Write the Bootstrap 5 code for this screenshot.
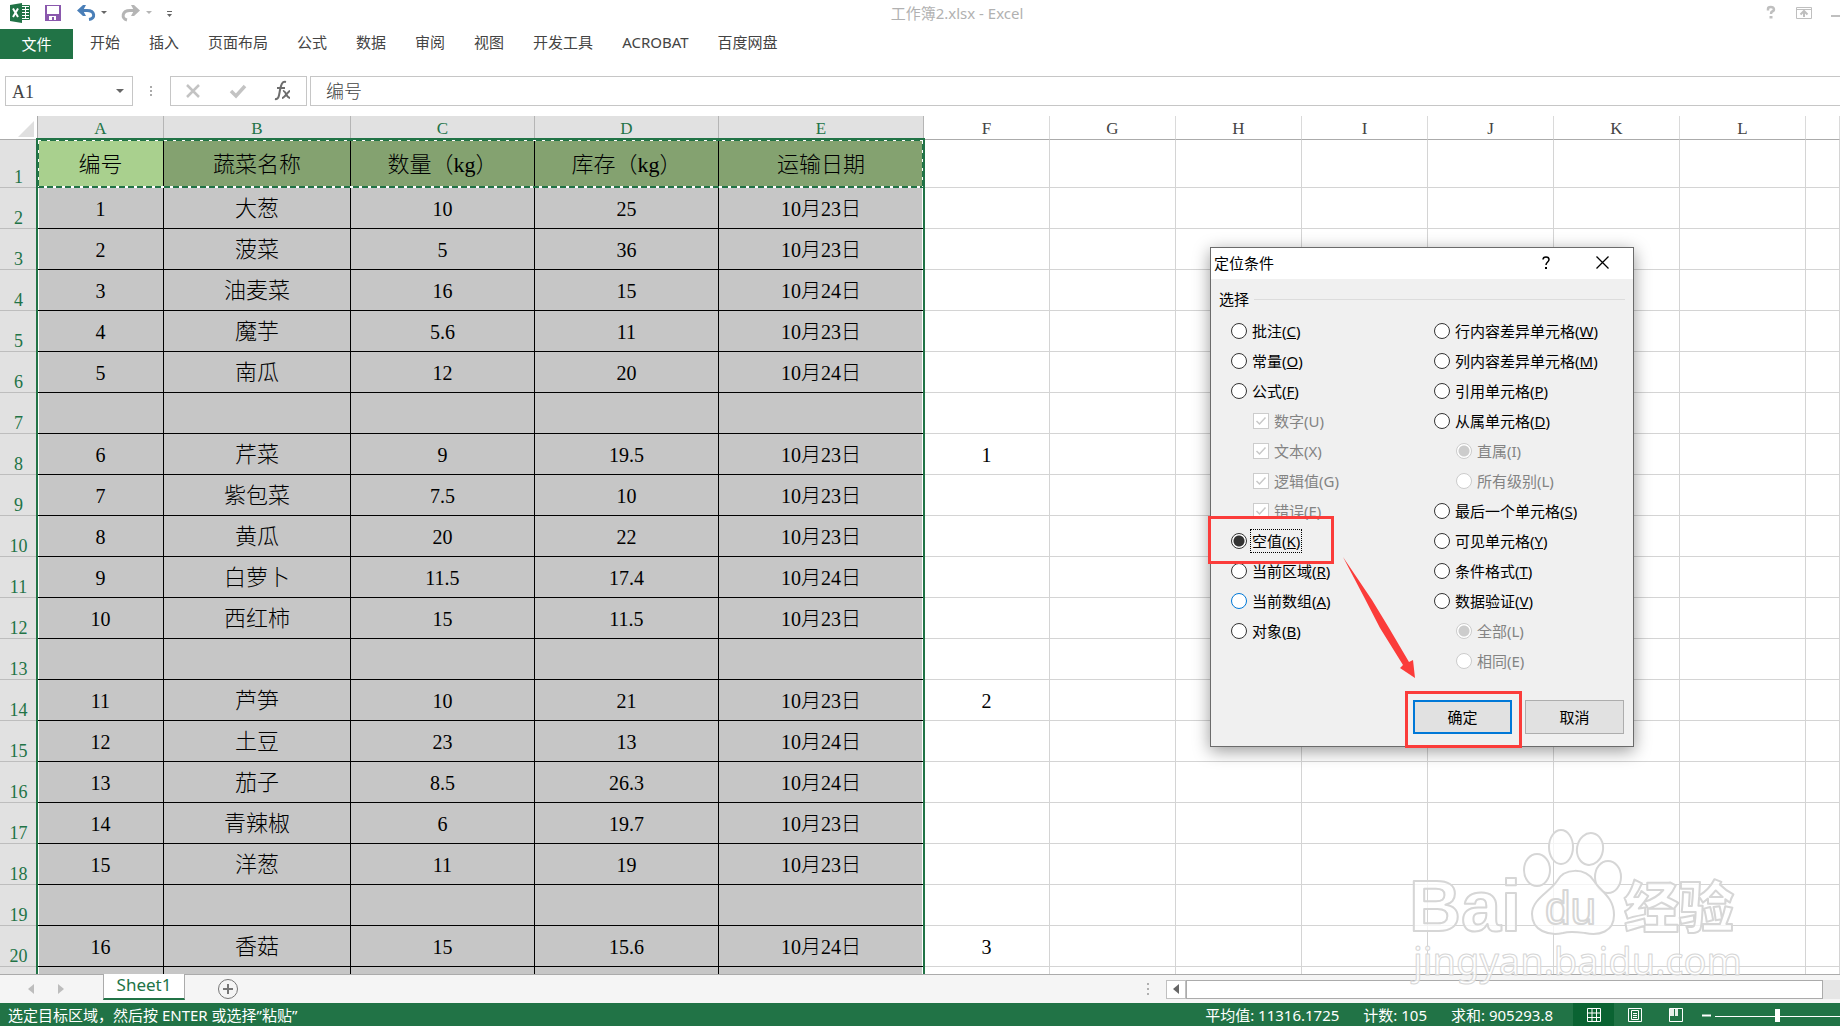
<!DOCTYPE html>
<html lang="zh-CN">
<head>
<meta charset="utf-8">
<meta name="viewport" content="width=device-width, initial-scale=1">
<title>工作簿2.xlsx - Excel</title>
<link href="https://cdn.jsdelivr.net/npm/bootstrap@5.3.0/dist/css/bootstrap.min.css" rel="stylesheet">
<style>
:root{--xl:#217346;--line:#d4d4d4;--ui:"Noto Sans","Noto Sans CJK SC",sans-serif;--sheet:"Liberation Serif","Noto Sans CJK SC",serif}
body{font-family:var(--ui);font-size:15px;line-height:20px;color:#444;background:#fff}
button,input{font:inherit;color:inherit}
.app{min-width:1200px}
.titlebar{height:29px;padding:0 0 4px 74px}
.titlebar .doc-title{color:#b1b1b1}
.icon-btn{border:0;background:none;padding:0;display:flex;align-items:center;justify-content:center}
.icon-btn svg{display:block}
.quick{left:0;top:0}
.wincontrols{right:0;top:0}
.ribbon{height:30px;gap:1px}
.ribbon .nav-link{color:#444;padding:0 14px;line-height:27px}
.ribbon .file-tab{background:var(--xl);color:#fff;width:73px;padding:0;text-align:center;line-height:30px;margin-right:2px}
.formula{height:57px;padding:17px 0 10px 5px}
.fbox{border:1px solid #c6c6c6;height:30px;background:#fff}
.namebox{width:128px}
.namebox input,.fx-input{border:0;outline:0;background:none;min-width:0;width:100%;font-family:var(--sheet);font-size:18px;font-weight:300;padding-top:3px}
.fx-group{width:137px;margin-left:16px;margin-right:3px}
.fx-input{padding-left:15px}
.grid-area{min-height:0}
.sheet-grid{table-layout:fixed;width:100%;border-collapse:separate;border-spacing:0;font-family:var(--sheet);font-size:20px;line-height:24px;color:#000}
.sheet-grid th,.sheet-grid td{padding:0;text-align:center;vertical-align:middle;font-weight:300;overflow:hidden;white-space:nowrap;border-right:1px solid var(--line);border-bottom:1px solid var(--line)}
.sheet-grid td{padding-top:2px}
.sheet-grid thead th{height:24px;font-size:17px;line-height:20px;padding-top:3px;color:#444;border-bottom-color:#ababab;border-right-color:#dadada}
.sheet-grid thead th.sel{background:#e1e1e1;color:var(--xl);border-right-color:#b5b5b5}
.sheet-grid thead th.corner{background:#fff;text-align:right;border-color:#ababab}
.corner svg{display:block;margin-left:18px}
.sheet-grid tbody tr{height:41px}
.sheet-grid tbody tr:first-child{height:48px}
.sheet-grid tbody th{background:#e1e1e1;color:var(--xl);font-size:18px;line-height:20px;vertical-align:bottom;border-bottom-color:#bdbdbd;border-right-color:var(--xl)}
.sheet-grid td.sel{background:#c6c6c6;border-color:#000}
.sheet-grid td.edge{box-shadow:inset -1px 0 #fff}
.sheet-grid td.start{box-shadow:inset 1px 0 #fff}
.sheet-grid td.veg{font-size:22px}
.sheet-grid tr.head td.sel{background:#84a270;font-size:22px}
.sheet-grid tr.head td.active-cell{background:#a9d08e}
.selection{left:36px;top:22px;width:889px;bottom:0;border:2px solid var(--xl);border-bottom:0}
.ants{left:36px;top:22px}
.sheetbar{height:29px;background:#f5f5f5;border-top:1px solid #ababab}
.sheet-tab{width:82px;height:26px;margin:-1px 24px 0 39px;background:#fff;border:1px solid #ababab;border-top:0;border-bottom:2px solid var(--xl);color:var(--xl);font-size:17px;line-height:22px;text-align:center;text-decoration:none}
.scrollrow{width:674px;height:19px;background:#e6e6e6}
.scrollrow .arrow{width:20px;border:1px solid #c0c0c0;background:#fff}
.scrollrow .thumb{width:637px;border:1px solid #ababab;background:#fff}
.statusbar{height:23px;background:var(--xl);color:#fff}
.status-stats{gap:24px;margin-right:20px}
.view-btn{width:41px;height:23px}
.view-btn.current{background:#0a6332}
.dlg{left:1210px;top:247px;width:424px;height:500px;background:#f0f0f0;border:1px solid #6b6b6b;color:#000;box-shadow:0 4px 16px rgba(0,0,0,.4)}
.dlg-title{height:31px;background:#fff;padding:0 2px 2px 3px}
.dlg-title .icon-btn{width:57px;height:29px}
.group-title{height:38px;padding:2px 8px 0 8px}
.group-title::after{content:"";flex:1;border-top:1px solid #dcdcdc;margin-left:5px}
.opts{padding:0 20px;margin-top:-1px}
.opt{height:30px;gap:5px}
.opt.sub{padding-left:22px}
.opt input{appearance:none;width:16px;height:16px;flex:none;margin:0;border:1px solid #333;background:#fff}
.opt input[type=radio]{border-radius:50%}
.opt input[type=radio]:checked{background:radial-gradient(circle,#333 0 5px,#fff 6px)}
.opt input:disabled{border-color:#ccc}
.opt input[type=radio]:disabled:checked{background:radial-gradient(circle,#ccc 0 5px,#fff 6px)}
.opt input[type=checkbox]:checked{background:#fff url("data:image/svg+xml,%3Csvg xmlns='http://www.w3.org/2000/svg' viewBox='0 0 14 14'%3E%3Cpath d='M2.5 7l3 3 6-6.500' fill='none' stroke='%23c8c8c8' stroke-width='1.500'/%3E%3C/svg%3E")}
.opt input.hot{border-color:#0078d7}
.opt input:disabled+label{color:#838383}
.opt label{line-height:20px}
.opt label.focused{outline:1px dotted #000;outline-offset:1px}
.opts-left{width:203px}
.dlg-btn{width:99px;height:34px;border:1px solid #adadad;background:#e1e1e1;padding:0}
.dlg-btn.default{border:2px solid #0078d7}
.dlg-foot{padding:0 9px 12px;gap:13px}
.callout{border:3px solid #fb3c3a;pointer-events:none}
.callout.pick{left:1208px;top:516px;width:126px;height:48px}
.callout.ok{left:1405px;top:691px;width:117px;height:57px}
.callout-arrow{left:1335px;top:550px;pointer-events:none}
.watermark{left:1400px;top:820px;pointer-events:none}
</style>
</head>
<body>
<div class="app position-relative d-flex flex-column vh-100 overflow-hidden">
  <header class="titlebar position-relative d-flex align-items-center justify-content-center flex-shrink-0">
    <div class="quick position-absolute">
      <svg width="180" height="29" viewBox="0 0 180 29" role="img" aria-label="Excel">
        <path d="M20 5.500h9.500v14H20z" fill="#fff" stroke="#217346"/>
        <path d="M22 8h3m1 0h3M22 11h3m1 0h3M22 14h3m1 0h3M22 17h3m1 0h3" stroke="#217346" stroke-width="2"/>
        <path d="M10 5l12-2v20l-12-2z" fill="#217346"/>
        <path d="M13 8.500l5 8.500M18 8.500L13 17" stroke="#fff" stroke-width="2"/>
        <path d="M45 5h16v16H45z" fill="#8a58ad"/><path d="M47 6h12v8H47zM49 16h7v4h-2v-3h-2v3h-3z" fill="#fff"/>
        <path d="M81 10.500h6c8 0 9 8 2 9" fill="none" stroke="#4a7fb8" stroke-width="3"/><path d="M77 10.500L83 5h3l-3 5.500 3 5.500h-3z" fill="#4a7fb8"/>
        <path d="M101 11h6l-3 3z" fill="#666"/>
        <path d="M136 10.500h-6c-8 0-9 8-3 9.500" fill="none" stroke="#b5b5b5" stroke-width="3"/><path d="M140 10.500L134 5h-3l3 5.500-3 5.500h3z" fill="#b5b5b5"/>
        <path d="M146 11h6l-3 3z" fill="#b5b5b5"/>
        <path d="M167 11.500h5" stroke="#666"/><path d="M167 14h5l-2.500 3z" fill="#666"/>
      </svg>
    </div>
    <span class="doc-title">工作簿2.xlsx - Excel</span>
    <div class="wincontrols position-absolute">
      <svg width="80" height="29" viewBox="0 0 80 29" role="img" aria-label="窗口按钮">
        <path d="M8 10.500V9c0-1.500 1-2 2.700-2 4 0 4 3.500 1.500 4.500-1.200.5-1.200 1-1.200 2.500" fill="none" stroke="#bfbfbf" stroke-width="2.500"/><path d="M9.500 16h3v2.500h-3z" fill="#bfbfbf"/>
        <path d="M36.500 7.500h15v11h-15zM36.500 9.500h15" fill="none" stroke="#bfbfbf"/><path d="M44 17v-6m-3.500 3.500L44 11l3.500 3.500" fill="none" stroke="#bfbfbf" stroke-width="2"/>
        <path d="M71 16h9" stroke="#bfbfbf" stroke-width="2"/>
      </svg>
    </div>
  </header>
  <nav class="ribbon nav flex-shrink-0">
    <a class="nav-link file-tab" href="#">文件</a>
    <a class="nav-link" href="#">开始</a>
    <a class="nav-link" href="#">插入</a>
    <a class="nav-link" href="#">页面布局</a>
    <a class="nav-link" href="#">公式</a>
    <a class="nav-link" href="#">数据</a>
    <a class="nav-link" href="#">审阅</a>
    <a class="nav-link" href="#">视图</a>
    <a class="nav-link" href="#">开发工具</a>
    <a class="nav-link" href="#">ACROBAT</a>
    <a class="nav-link" href="#">百度网盘</a>
  </nav>
  <div class="formula d-flex flex-shrink-0">
    <div class="fbox namebox d-flex align-items-center ps-1">
      <input type="text" value="A1" aria-label="名称框">
      <button class="icon-btn pe-2" type="button" aria-label="展开"><svg width="8" height="4"><path d="M0 0h8l-4 4z" fill="#666"/></svg></button>
    </div>
    <svg class="ms-3" width="5" height="30"><path d="M1 10h2v2H1zM1 14h2v2H1zM1 18h2v2H1z" fill="#aaa"/></svg>
    <div class="fbox fx-group d-flex align-items-center">
      <button class="icon-btn flex-fill" type="button" aria-label="取消"><svg width="16" height="16"><path d="M2 2l12 12M14 2L2 14" stroke="#c3c3c3" stroke-width="2.500"/></svg></button>
      <button class="icon-btn flex-fill" type="button" aria-label="输入"><svg width="18" height="16"><path d="M2 8l5 5L16 3" fill="none" stroke="#c3c3c3" stroke-width="3.500"/></svg></button>
      <button class="icon-btn flex-fill" type="button" aria-label="插入函数"><svg width="18" height="22"><path d="M1 19c4 1 4-4 5-9s2-9 6-8M3 8h8" fill="none" stroke="#6d6d6d" stroke-width="2"/><path d="M9 11c3-1 3 7 7 7M16 11c-2 0-5 7-8 7" fill="none" stroke="#6d6d6d" stroke-width="2"/></svg></button>
    </div>
    <div class="fbox flex-fill border-end-0 d-flex"><input class="fx-input" type="text" value="编号" aria-label="编辑栏"></div>
  </div>

  <main class="grid-area flex-fill position-relative overflow-hidden">
    <table class="sheet-grid">
      <colgroup><col style="width:38px"><col style="width:126px"><col style="width:187px"><col style="width:184px"><col style="width:184px"><col style="width:205px"><col style="width:126px"><col style="width:126px"><col style="width:126px"><col style="width:126px"><col style="width:126px"><col style="width:126px"><col style="width:126px"><col></colgroup>
      <thead><tr><th class="corner" aria-label="全选"><svg width="16" height="16"><path d="M16 0v16H0z" fill="#dfdfdf"/></svg></th><th class="sel">A</th><th class="sel">B</th><th class="sel">C</th><th class="sel">D</th><th class="sel">E</th><th>F</th><th>G</th><th>H</th><th>I</th><th>J</th><th>K</th><th>L</th><th></th></tr></thead>
      <tbody id="rows"></tbody>
    </table>
    <div class="selection position-absolute"></div>
    <svg class="ants position-absolute" width="889" height="52">
      <path d="M2 49h886" stroke="#fff" stroke-width="2"/>
      <path d="M2 49h886" stroke="#217346" stroke-width="2" stroke-dasharray="6 3"/>
      <path d="M2 2.500h886M2.500 3v46M886.500 3v46" stroke="#217346"/>
      <path d="M2 2.500h886M2.500 3v46M886.500 3v46" stroke="#fff" stroke-dasharray="3 6"/>
    </svg>
  </main>

  <div class="sheetbar d-flex flex-shrink-0 position-relative">
    <div class="d-flex align-items-center">
      <button class="icon-btn ms-4 ps-1" type="button" aria-label="上一张"><svg width="6" height="10"><path d="M6 0v10L0 5z" fill="#bdbdbd"/></svg></button>
      <button class="icon-btn ms-4" type="button" aria-label="下一张"><svg width="6" height="10"><path d="M0 0v10l6-5z" fill="#bdbdbd"/></svg></button>
    </div>
    <a class="sheet-tab" href="#">Sheet1</a>
    <button class="icon-btn ms-2" type="button" aria-label="新工作表"><svg width="22" height="22"><circle cx="11" cy="11" r="9.500" fill="none" stroke="#767676"/><path d="M6 11h10M11 6v10" stroke="#767676" stroke-width="2"/></svg></button>
    <div class="ms-auto d-flex align-items-center">
      <svg class="me-3" width="4" height="14"><path d="M1 1h2v2H1zM1 6h2v2H1zM1 11h2v2H1z" fill="#b0b0b0"/></svg>
      <div class="scrollrow d-flex">
        <button class="icon-btn arrow" type="button" aria-label="向左滚动"><svg width="6" height="10"><path d="M6 0v10L0 5z" fill="#666"/></svg></button>
        <div class="thumb"></div>
      </div>
    </div>
  </div>
  <footer class="statusbar d-flex align-items-center flex-shrink-0">
    <span class="ps-2">选定目标区域，然后按 ENTER 或选择”粘贴”</span>
    <div class="ms-auto d-flex align-items-center">
      <div class="status-stats d-flex"><span>平均值: 11316.1725</span><span>计数: 105</span><span>求和: 905293.8</span></div>
      <button class="icon-btn view-btn current" type="button" aria-label="普通"><svg width="14" height="14"><path d="M.5.500h13v13H.5zM5 0v14M9.500 0v14M0 5h14M0 9.500h14" fill="none" stroke="#fff"/></svg></button>
      <button class="icon-btn view-btn" type="button" aria-label="页面布局"><svg width="14" height="14"><path d="M.5.500h13v13H.5zM3.500 2.500h7v9h-7zM5 5.500h4M5 7.500h4M5 9.500h4" fill="none" stroke="#fff"/></svg></button>
      <button class="icon-btn view-btn" type="button" aria-label="分页预览"><svg width="14" height="14"><path d="M.5.500h13v13H.5z" fill="none" stroke="#fff"/><path d="M1 1h4v7H1zM6 1h3v7H6z" fill="#e6eee9"/></svg></button>
      <svg class="d-block" width="144" height="23"><path d="M6 12.500h9" stroke="#fff" stroke-width="2"/><path d="M19 13.500h125" stroke="#fff"/><path d="M79 6h5v13h-5z" fill="#fff"/></svg>
    </div>
  </footer>

  <svg class="watermark position-absolute" width="350" height="175" viewBox="0 0 350 175" aria-label="Baidu 经验">
    <g fill="#fff" fill-opacity=".75" stroke="#d6d6d6" stroke-width="2" stroke-linejoin="round">
      <ellipse cx="137" cy="50" rx="13" ry="16"/>
      <ellipse cx="161" cy="27" rx="12" ry="17"/>
      <ellipse cx="190" cy="29" rx="13" ry="16" transform="rotate(10 190 29)"/>
      <ellipse cx="208" cy="57" rx="13" ry="16"/>
      <path d="M157 61c7-13 28-14 37 0 6 10 20 16 20 34 0 17-15 21-29 18-8-1-15-2-22 0-14 3-31-2-31-19 0-15 18-22 25-33z"/>
      <g font-family="Liberation Sans,sans-serif"><text x="9" y="111" font-size="72" font-weight="700">Bai</text><text x="145" y="104" font-size="46">du</text></g>
      <text x="224" y="107" font-family="Noto Sans CJK SC,sans-serif" font-size="55" font-weight="900">经验</text>
      <text x="13" y="155" font-family="Noto Sans,sans-serif" font-size="38" stroke-width="1">jingyan.baidu.com</text>
    </g>
  </svg>

  <section class="dlg position-absolute d-flex flex-column" role="dialog" aria-label="定位条件">
    <div class="dlg-title d-flex align-items-center">
      <span class="me-auto">定位条件</span>
      <button class="icon-btn" type="button" aria-label="帮助"><svg width="8" height="13"><path d="M1 3.500C1 0 7 0 7 3.500 7 6 4 6 4 9" fill="none" stroke="#000" stroke-width="1.500"/><path d="M3 11h2v2H3z"/></svg></button>
      <button class="icon-btn" type="button" aria-label="关闭"><svg width="13" height="13"><path d="M.5.500l12 12M12.500.500l-12 12" stroke="#000" stroke-width="1.300"/></svg></button>
    </div>
    <div class="group-title d-flex align-items-center">选择</div>
    <div class="opts d-flex">
      <div class="opts-left">
        <div class="opt d-flex align-items-center"><input type="radio" name="goto" id="o1"><label for="o1">批注(<u>C</u>)</label></div>
        <div class="opt d-flex align-items-center"><input type="radio" name="goto" id="o2"><label for="o2">常量(<u>O</u>)</label></div>
        <div class="opt d-flex align-items-center"><input type="radio" name="goto" id="o3"><label for="o3">公式(<u>F</u>)</label></div>
        <div class="opt sub d-flex align-items-center"><input type="checkbox" id="c1" checked disabled><label for="c1">数字(U)</label></div>
        <div class="opt sub d-flex align-items-center"><input type="checkbox" id="c2" checked disabled><label for="c2">文本(X)</label></div>
        <div class="opt sub d-flex align-items-center"><input type="checkbox" id="c3" checked disabled><label for="c3">逻辑值(G)</label></div>
        <div class="opt sub d-flex align-items-center"><input type="checkbox" id="c4" checked disabled><label for="c4">错误(E)</label></div>
        <div class="opt d-flex align-items-center"><input type="radio" name="goto" id="o4" checked><label class="focused" for="o4">空值(<u>K</u>)</label></div>
        <div class="opt d-flex align-items-center"><input type="radio" name="goto" id="o5"><label for="o5">当前区域(<u>R</u>)</label></div>
        <div class="opt d-flex align-items-center"><input class="hot" type="radio" name="goto" id="o6"><label for="o6">当前数组(<u>A</u>)</label></div>
        <div class="opt d-flex align-items-center"><input type="radio" name="goto" id="o7"><label for="o7">对象(<u>B</u>)</label></div>
      </div>
      <div>
        <div class="opt d-flex align-items-center"><input type="radio" name="goto" id="p1"><label for="p1">行内容差异单元格(<u>W</u>)</label></div>
        <div class="opt d-flex align-items-center"><input type="radio" name="goto" id="p2"><label for="p2">列内容差异单元格(<u>M</u>)</label></div>
        <div class="opt d-flex align-items-center"><input type="radio" name="goto" id="p3"><label for="p3">引用单元格(<u>P</u>)</label></div>
        <div class="opt d-flex align-items-center"><input type="radio" name="goto" id="p4"><label for="p4">从属单元格(<u>D</u>)</label></div>
        <div class="opt sub d-flex align-items-center"><input type="radio" name="level" id="l1" checked disabled><label for="l1">直属(I)</label></div>
        <div class="opt sub d-flex align-items-center"><input type="radio" name="level" id="l2" disabled><label for="l2">所有级别(L)</label></div>
        <div class="opt d-flex align-items-center"><input type="radio" name="goto" id="p5"><label for="p5">最后一个单元格(<u>S</u>)</label></div>
        <div class="opt d-flex align-items-center"><input type="radio" name="goto" id="p6"><label for="p6">可见单元格(<u>Y</u>)</label></div>
        <div class="opt d-flex align-items-center"><input type="radio" name="goto" id="p7"><label for="p7">条件格式(<u>T</u>)</label></div>
        <div class="opt d-flex align-items-center"><input type="radio" name="goto" id="p8"><label for="p8">数据验证(<u>V</u>)</label></div>
        <div class="opt sub d-flex align-items-center"><input type="radio" name="valid" id="v1" checked disabled><label for="v1">全部(L)</label></div>
        <div class="opt sub d-flex align-items-center"><input type="radio" name="valid" id="v2" disabled><label for="v2">相同(E)</label></div>
      </div>
    </div>
    <div class="dlg-foot d-flex justify-content-end mt-auto">
      <button class="dlg-btn default" type="button">确定</button>
      <button class="dlg-btn" type="button">取消</button>
    </div>
  </section>
  <div class="callout pick position-absolute"></div>
  <div class="callout ok position-absolute"></div>
  <svg class="callout-arrow position-absolute" width="90" height="135"><path d="M8 7L37 50L54 78L74 112L78 110L80 128L65 118L68 115L45 78L29 47z" fill="#fb3c3a"/></svg>
</div>
<script src="https://cdn.jsdelivr.net/npm/bootstrap@5.3.0/dist/js/bootstrap.bundle.min.js"></script>
<script>
const data = [
  ['编号','蔬菜名称','数量（kg）','库存（kg）','运输日期'],
  ['1','大葱','10','25','10月23日'],['2','菠菜','5','36','10月23日'],['3','油麦菜','16','15','10月24日'],
  ['4','魔芋','5.6','11','10月23日'],['5','南瓜','12','20','10月24日'],[],
  ['6','芹菜','9','19.5','10月23日','1'],['7','紫包菜','7.5','10','10月23日'],['8','黄瓜','20','22','10月23日'],
  ['9','白萝卜','11.5','17.4','10月24日'],['10','西红柿','15','11.5','10月23日'],[],
  ['11','芦笋','10','21','10月23日','2'],['12','土豆','23','13','10月24日'],['13','茄子','8.5','26.3','10月24日'],
  ['14','青辣椒','6','19.7','10月23日'],['15','洋葱','11','19','10月23日'],[],
  ['16','香菇','15','15.6','10月24日','3'],[]
];
const roles = ['sel start', 'sel veg', 'sel', 'sel', 'sel edge'];
document.getElementById('rows').innerHTML = data.map((r, i) => {
  let cells = '';
  for (let c = 0; c < 13; c++) {
    const cls = (roles[c] || '') + (i === 0 && c === 0 ? ' active-cell' : '');
    cells += `<td class="${cls}">${r[c] || ''}</td>`;
  }
  return `<tr class="${i ? '' : 'head'}"><th>${i < 20 ? i + 1 : ''}</th>${cells}</tr>`;
}).join('');
</script>
</body>
</html>
